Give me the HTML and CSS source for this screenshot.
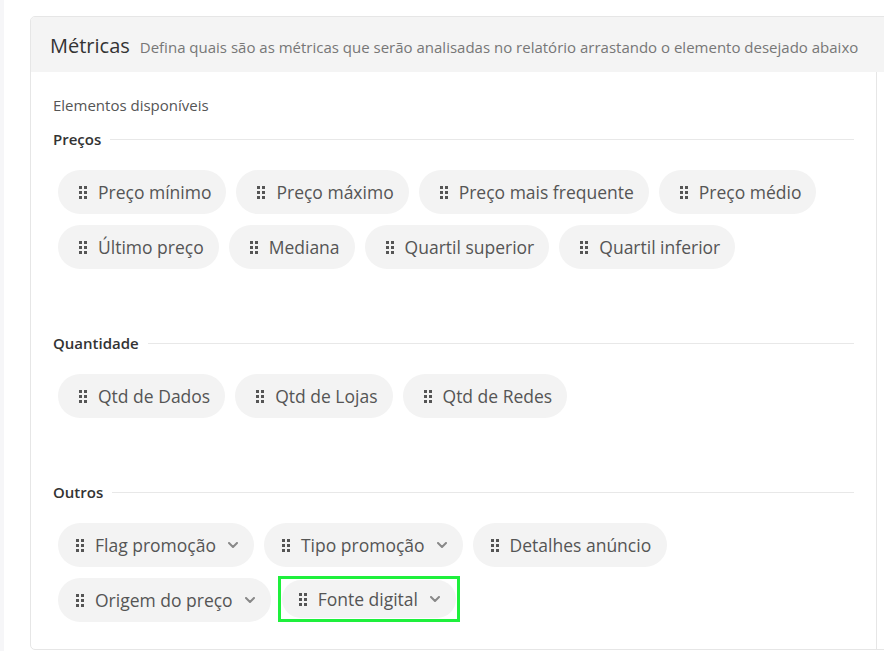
FILE: index.html
```html
<!DOCTYPE html>
<html lang="pt-BR">
<head>
    <meta charset="UTF-8">
    <meta name="viewport" content="width=device-width, initial-scale=1.0">
    <title>Métricas</title>
    <link rel="stylesheet" href="styles.css">
</head>
<body>
    <div class="page">
        <div class="edge"></div>
        <main class="content">
            <section class="card">
                <header class="card-header">
                    <h2>Métricas</h2>
                    <span class="hint">Defina quais são as métricas que serão analisadas no relatório arrastando o elemento desejado abaixo</span>
                </header>
                <div class="card-body">
                    <div class="available">
                        <p class="caption">Elementos disponíveis</p>

                        <div class="group">
                            <div class="group-title"><span>Preços</span></div>
                            <div class="chips">
                                <span class="chip"><i class="grip"></i>Preço mínimo</span>
                                <span class="chip"><i class="grip"></i>Preço máximo</span>
                                <span class="chip"><i class="grip"></i>Preço mais frequente</span>
                                <span class="chip"><i class="grip"></i>Preço médio</span>
                                <span class="chip"><i class="grip"></i>Último preço</span>
                                <span class="chip"><i class="grip"></i>Mediana</span>
                                <span class="chip"><i class="grip"></i>Quartil superior</span>
                                <span class="chip"><i class="grip"></i>Quartil inferior</span>
                            </div>
                        </div>

                        <div class="group">
                            <div class="group-title"><span>Quantidade</span></div>
                            <div class="chips">
                                <span class="chip"><i class="grip"></i>Qtd de Dados</span>
                                <span class="chip"><i class="grip"></i>Qtd de Lojas</span>
                                <span class="chip"><i class="grip"></i>Qtd de Redes</span>
                            </div>
                        </div>

                        <div class="group last">
                            <div class="group-title"><span>Outros</span></div>
                            <div class="chips">
                                <span class="chip chip-menu"><i class="grip"></i>Flag promoção<svg class="caret" width="10" height="6" viewBox="0 0 10 6"><polyline points="1,1 5,5 9,1"/></svg></span>
                                <span class="chip chip-menu"><i class="grip"></i>Tipo promoção<svg class="caret" width="10" height="6" viewBox="0 0 10 6"><polyline points="1,1 5,5 9,1"/></svg></span>
                                <span class="chip chip-menu"><i class="grip"></i>Detalhes anúncio</span>
                                <span class="chip chip-menu"><i class="grip"></i>Origem do preço<svg class="caret" width="10" height="6" viewBox="0 0 10 6"><polyline points="1,1 5,5 9,1"/></svg></span>
                                <span class="highlight">
                                    <span class="chip chip-menu chip-small"><i class="grip"></i>Fonte digital<svg class="caret" width="10" height="6" viewBox="0 0 10 6"><polyline points="1,1 5,5 9,1"/></svg></span>
                                </span>
                            </div>
                        </div>
                    </div>
                    <div class="selected"></div>
                </div>
            </section>
        </main>
    </div>
</body>
</html>
```

FILE: styles.css
```css
html, body {
    margin: 0;
    height: 100%;
    overflow: hidden;
}

body {
    font-family: "Open Sans", Arial, sans-serif;
    background-color: #fff;
    color: #555;
}

.page {
    display: flex;
    min-height: 100%;
}

.edge {
    width: 4px;
    flex-shrink: 0;
    background-color: #f6f6f8;
}

.content {
    flex: 1;
    padding: 16px 0 0 26px;
}

.card {
    width: 1100px;
    border: 1px solid #e6e6e6;
    border-radius: 5px;
    overflow: hidden;
}

.card-header {
    display: flex;
    align-items: baseline;
    gap: 10px;
    height: 55px;
    box-sizing: border-box;
    padding: 15px 19px 0;
    background-color: #f4f4f4;
}

.card-header h2 {
    margin: 0;
    font-size: 20px;
    font-weight: 400;
    line-height: 27px;
    color: #333;
}

.hint {
    font-size: 15px;
    color: #777;
    white-space: nowrap;
}

.card-body {
    display: flex;
}

.available {
    width: 846px;
    box-sizing: border-box;
    padding: 23px 22px 27px;
    border-right: 1px solid #e6e6e6;
}

.selected {
    flex: 1;
}

.caption {
    margin: 0 0 14px;
    font-size: 15px;
    line-height: 20px;
    color: #555;
}

.group {
    margin-bottom: 64px;
}

.group.last {
    margin-bottom: 0;
}

.group-title {
    display: flex;
    align-items: center;
    gap: 9px;
    margin-bottom: 21px;
    font-size: 15px;
    font-weight: 600;
    line-height: 20px;
    color: #333;
}

.group-title::after {
    content: "";
    flex: 1;
    height: 1px;
    background-color: #e8e8e8;
}

.chips {
    display: flex;
    flex-wrap: wrap;
    align-items: center;
    gap: 11px 10px;
    padding-left: 5px;
}

.chip {
    display: inline-flex;
    align-items: center;
    height: 44px;
    box-sizing: border-box;
    padding: 0 15px 0 21px;
    border-radius: 22px;
    background-color: #f3f3f3;
    font-size: 17.5px;
    color: #555;
    white-space: nowrap;
}

.chip-menu {
    padding: 0 16px 0 18px;
}

.chip-small {
    height: 38px;
    padding-left: 17px;
}

.grip {
    width: 8px;
    height: 13px;
    margin-right: 11px;
    background-image: radial-gradient(circle, #555 1.5px, transparent 1.6px);
    background-size: 5px 5px;
    background-position: -1px -1px;
}

.caret {
    margin-left: 12px;
    fill: none;
    stroke: #888;
    stroke-width: 2;
    stroke-linecap: round;
    stroke-linejoin: round;
}

.highlight {
    display: inline-flex;
    margin: -2px 0 0 -3px;
    padding: 1px;
    border: 3px solid #1ef03c;
}
```
